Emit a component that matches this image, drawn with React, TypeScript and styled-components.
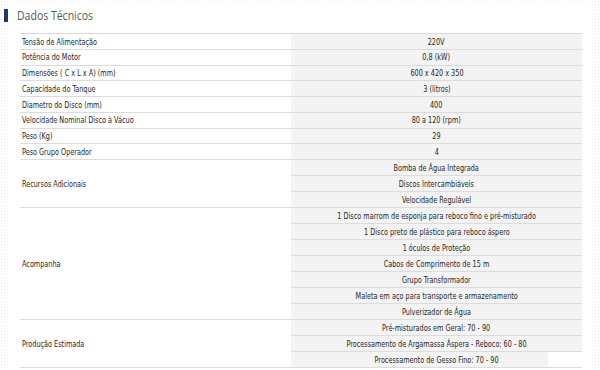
import React from "react";
import styled, { createGlobalStyle } from "styled-components";

type Spec = { label: string; values: string[] };

const specs: Spec[] = [
  { label: "Tensão de Alimentação", values: ["220V"] },
  { label: "Potência do Motor", values: ["0,8 (kW)"] },
  { label: "Dimensões ( C x L x A) (mm)", values: ["600 x 420 x 350"] },
  { label: "Capacidade do Tanque", values: ["3 (litros)"] },
  { label: "Diametro do Disco (mm)", values: ["400"] },
  { label: "Velocidade Nominal Disco à Vácuo", values: ["80 a 120 (rpm)"] },
  { label: "Peso (Kg)", values: ["29"] },
  { label: "Peso Grupo Operador", values: ["4"] },
  {
    label: "Recursos Adicionais",
    values: ["Bomba de Água Integrada", "Discos Intercambiáveis", "Velocidade Regulável"],
  },
  {
    label: "Acompanha",
    values: [
      "1 Disco marrom de esponja para reboco fino e pré-misturado",
      "1 Disco preto de plástico para reboco áspero",
      "1 óculos de Proteção",
      "Cabos de Comprimento de 15 m",
      "Grupo Transformador",
      "Maleta em aço para transporte e armazenamento",
      "Pulverizador de Água",
    ],
  },
  {
    label: "Produção Estimada",
    values: [
      "Pré-misturados em Geral: 70 - 90",
      "Processamento de Argamassa Áspera - Reboco: 60 - 80",
      "Processamento de Gesso Fino: 70 - 90",
    ],
  },
];

const GlobalStyle = createGlobalStyle`
  html, body {
    margin: 0;
    padding: 0;
    background: #fff;
  }
  body {
    font-family: "DejaVu Sans Condensed", "Liberation Sans", sans-serif;
  }
`;

const Frame = styled.div`
  width: 600px;
  height: 370px;
  overflow: hidden;
  box-sizing: border-box;
  padding: 3px 10px 0 8px;
  background-color: #fff;
  background-image: radial-gradient(#ededed 0.7px, transparent 1px);
  background-size: 3px 3px;
`;

const Panel = styled.div`
  height: 100%;
  background: #fff;
  padding: 6px 0 0 0;
  box-sizing: border-box;
`;

const Heading = styled.div`
  display: flex;
  align-items: center;
  gap: 9px;
  height: 13px;
  margin-left: -4px;
`;

const Marker = styled.span`
  width: 4px;
  height: 13px;
  background: #1b3a6b;
`;

const Title = styled.h2`
  margin: 0;
  font-family: "Open Sans", "Liberation Sans", sans-serif;
  font-size: 12.5px;
  font-weight: 400;
  color: #5a5a5a;
  transform: scaleX(0.84);
  transform-origin: left center;
`;

const Table = styled.table`
  margin: 11px 0 0 12px;
  width: 562px;
  border-collapse: collapse;
  table-layout: fixed;
  border-top: 1px solid #d9d9d9;
  font-size: 9.5px;
  color: #262626;
`;

const Label = styled.td`
  width: 269px;
  padding: 0 0 0 2px;
  background: #fff;
  border-bottom: 1px solid #dcdcdc;
  vertical-align: middle;
  white-space: nowrap;
`;

const Value = styled.td<{ $h: number; $cut?: boolean }>`
  height: ${(p) => p.$h}px;
  padding: 0;
  text-align: center;
  white-space: nowrap;
  border-bottom: 1px solid #dcdcdc;
  background: ${(p) =>
    p.$cut ? "linear-gradient(to right, #f3f3f3 257px, #fff 257px)" : "#f3f3f3"};
`;

/* the site's font is a narrow one; squeeze the condensed face to its width */
const Narrow = styled.span<{ $origin: "left" | "center" }>`
  display: inline-block;
  transform: scaleX(0.76);
  transform-origin: ${(p) => p.$origin} center;
`;

const Row = styled.tr`
  line-height: 1;
`;

export default function App() {
  return (
    <>
      <GlobalStyle />
      <Frame>
        <Panel>
          <Heading>
            <Marker />
            <Title>Dados Técnicos</Title>
          </Heading>
          <Table>
            <tbody>
              {specs.map((spec, si) =>
                spec.values.map((v, i) => {
                  const single = spec.values.length === 1;
                  const last = si === specs.length - 1 && i === spec.values.length - 1;
                  return (
                    <Row key={spec.label + i}>
                      {i === 0 && (
                        <Label rowSpan={spec.values.length}>
                          <Narrow $origin="left">{spec.label}</Narrow>
                        </Label>
                      )}
                      <Value $h={single ? 14.75 : 15} $cut={last}>
                        <Narrow $origin="center">{v}</Narrow>
                      </Value>
                    </Row>
                  );
                })
              )}
            </tbody>
          </Table>
        </Panel>
      </Frame>
    </>
  );
}
